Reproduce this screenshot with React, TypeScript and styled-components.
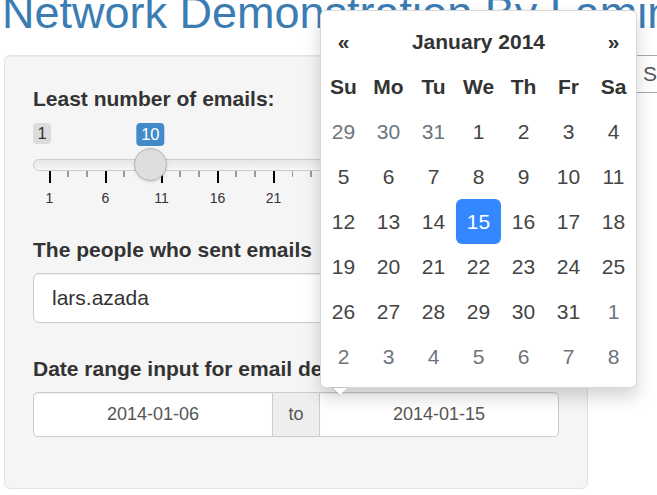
import * as React from "react";
import styled, { createGlobalStyle } from "styled-components";

const GlobalStyle = createGlobalStyle`
  html, body {
    margin: 0;
    overflow: hidden;
    background: #fff;
  }
  body {
    font-family: "Liberation Sans", Arial, Helvetica, sans-serif;
    color: #333;
  }
  * { box-sizing: border-box; }
`;

const colors = {
  text: "#333",
  muted: "#555",
  old: "#6c757d",
  border: "#ccc",
  well: "#f5f5f5",
  wellBorder: "#e3e3e3",
  sliderBlue: "#428bca",
  active: "#3388ff",
  title: "#3b7db3",
};

const SLIDER_MIN = 1;
const SLIDER_MAX = 45;
const SLIDER_VALUE = 10;
const HANDLE = 33;
const TRACK_W = 526;
const UNIT = (TRACK_W - HANDLE) / (SLIDER_MAX - SLIDER_MIN);

const Page = styled.div`
  position: relative;
  width: 657px;
  height: 495px;
  overflow: hidden;
`;

const Title = styled.h2`
  margin: -12px 0 17px 2px;
  font-size: 45px;
  line-height: 49.5px;
  font-weight: normal;
  color: ${colors.title};
  white-space: nowrap;
`;

const Row = styled.div`
  display: flex;
  align-items: flex-start;
`;

const Well = styled.div`
  flex: 0 0 584px;
  margin-left: 4px;
  padding: 28px 28px 29px;
  background: ${colors.well};
  border: 1px solid ${colors.wellBorder};
  border-radius: 6px;
  box-shadow: inset 0 1px 1px rgba(0, 0, 0, 0.05);
`;

const Label = styled.label`
  display: block;
  font-size: 21px;
  line-height: 30px;
  font-weight: bold;
  color: ${colors.text};
  margin-bottom: 8px;
  white-space: nowrap;
`;

const Slider = styled.div`
  position: relative;
  height: 90px;
  margin-bottom: 23px;
`;

const MinLabel = styled.span`
  position: absolute;
  top: 1px;
  left: 0;
  height: 21px;
  padding: 0 4.5px;
  font-size: 16.5px;
  line-height: 21px;
  color: ${colors.text};
  background: rgba(0, 0, 0, 0.1);
  border-radius: 4px;
`;

const SingleLabel = styled.span`
  position: absolute;
  top: 1px;
  height: 23px;
  padding: 0 4.5px;
  font-size: 16.5px;
  line-height: 23px;
  color: #fff;
  background: ${colors.sliderBlue};
  border-radius: 4px;
  transform: translateX(-50%);
`;

const Track = styled.div`
  position: absolute;
  top: 37.5px;
  left: 0;
  width: ${TRACK_W}px;
  height: 12px;
  border: 1px solid ${colors.border};
  border-radius: 12px;
  background: linear-gradient(to bottom, #dedede -50%, #fff 150%);
`;

const Handle = styled.span`
  position: absolute;
  top: 26px;
  width: ${HANDLE}px;
  height: ${HANDLE}px;
  border-radius: 50%;
  border: 1px solid #b5b5b5;
  background: #dedede;
  box-shadow: 0 1px 3px rgba(0, 0, 0, 0.15);
`;

const Tick = styled.span<{ $major?: boolean }>`
  position: absolute;
  top: 49.5px;
  width: ${(p) => (p.$major ? 2 : 1.5)}px;
  height: ${(p) => (p.$major ? 11.5 : 6)}px;
  background: ${(p) => (p.$major ? "#000" : "#9a9a9a")};
`;

const GridText = styled.span`
  position: absolute;
  top: 69px;
  font-size: 14px;
  line-height: 14px;
  color: ${colors.text};
  transform: translateX(-50%);
`;

const Selectize = styled.div`
  height: 50px;
  margin-bottom: 31px;
  padding: 0 18px;
  display: flex;
  align-items: center;
  font-size: 21px;
  color: ${colors.text};
  background: #fff;
  border: 1px solid ${colors.border};
  border-radius: 6px;
  box-shadow: inset 0 1px 1px rgba(0, 0, 0, 0.075);
`;

const InputGroup = styled.div`
  display: flex;
  height: 45px;
  margin-bottom: 22px;
`;

const DateInput = styled.div<{ $side: "left" | "right" }>`
  flex: 1;
  display: flex;
  align-items: center;
  justify-content: center;
  font-size: 18px;
  color: ${colors.muted};
  background: #fff;
  border: 1px solid ${colors.border};
  border-radius: ${(p) => (p.$side === "left" ? "4.5px 0 0 4.5px" : "0 4.5px 4.5px 0")};
  box-shadow: inset 0 1px 1px rgba(0, 0, 0, 0.075);
`;

const Addon = styled.div`
  flex: 0 0 46px;
  display: flex;
  align-items: center;
  justify-content: center;
  font-size: 18px;
  color: ${colors.muted};
  background: #eee;
  border-top: 1px solid ${colors.border};
  border-bottom: 1px solid ${colors.border};
`;

const MainPanel = styled.div`
  flex: 1;
  margin-left: 45px;
`;

const SearchBox = styled.div`
  height: 38px;
  padding-left: 9px;
  font-size: 21px;
  line-height: 36px;
  color: ${colors.muted};
  background: #fff;
  border: 1px solid #aaa;
  white-space: nowrap;
`;

const Calendar = styled.div`
  position: absolute;
  top: 10px;
  left: 320px;
  width: 317px;
  padding: 8px 0;
  background: #fff;
  border: 1px solid rgba(0, 0, 0, 0.15);
  border-radius: 6px;
  box-shadow: 0 9px 18px rgba(0, 0, 0, 0.175);
  z-index: 10;

  &::before,
  &::after {
    content: "";
    position: absolute;
    border-left: solid transparent;
    border-right: solid transparent;
    border-top: solid;
  }
  &::before {
    left: 10px;
    bottom: -9px;
    border-width: 9px 8.5px 0;
    border-top-color: rgba(0, 0, 0, 0.12);
  }
  &::after {
    left: 11.5px;
    bottom: -7.5px;
    border-width: 7.5px 7px 0;
    border-top-color: #fff;
  }
`;

const CalGrid = styled.div`
  display: grid;
  grid-template-columns: repeat(7, 1fr);
  grid-auto-rows: 45px;
`;

const Cell = styled.div<{ $muted?: boolean; $active?: boolean; $bold?: boolean; $span?: number }>`
  display: flex;
  align-items: center;
  justify-content: center;
  font-size: 21px;
  font-weight: ${(p) => (p.$bold ? "bold" : "normal")};
  color: ${(p) => (p.$active ? "#fff" : p.$muted ? colors.old : p.$bold ? colors.text : "#444")};
  background: ${(p) => (p.$active ? colors.active : "transparent")};
  border-radius: 6px;
  grid-column: ${(p) => (p.$span ? `span ${p.$span}` : "auto")};
`;

const weekdays = ["Su", "Mo", "Tu", "We", "Th", "Fr", "Sa"];

function buildDays() {
  const days: { n: number; muted: boolean }[] = [];
  [29, 30, 31].forEach((n) => days.push({ n, muted: true }));
  for (let n = 1; n <= 31; n++) days.push({ n, muted: false });
  for (let n = 1; days.length < 42; n++) days.push({ n, muted: true });
  return days;
}

function RangeSlider() {
  const pos = (v: number) => HANDLE / 2 + (v - SLIDER_MIN) * UNIT;
  const majors: number[] = [];
  for (let v = SLIDER_MIN; v <= SLIDER_MAX; v += 5) majors.push(v);
  const minors: number[] = [];
  majors.slice(0, -1).forEach((v) => {
    minors.push(v + 5 / 3, v + 10 / 3);
  });
  return (
    <Slider>
      <Track />
      {majors.map((v) => (
        <Tick key={`M${v}`} $major style={{ left: pos(v) - 1 }} />
      ))}
      {minors.map((v) => (
        <Tick key={`m${v}`} style={{ left: pos(v) - 0.75 }} />
      ))}
      {majors.map((v) => (
        <GridText key={`t${v}`} style={{ left: pos(v) }}>
          {v}
        </GridText>
      ))}
      <MinLabel>{SLIDER_MIN}</MinLabel>
      <SingleLabel style={{ left: pos(SLIDER_VALUE) }}>{SLIDER_VALUE}</SingleLabel>
      <Handle style={{ left: pos(SLIDER_VALUE) - HANDLE / 2 }} />
    </Slider>
  );
}

function DatePicker() {
  const days = buildDays();
  return (
    <Calendar>
      <CalGrid>
        <Cell $bold>«</Cell>
        <Cell $bold $span={5}>January 2014</Cell>
        <Cell $bold>»</Cell>
        {weekdays.map((d) => (
          <Cell key={d} $bold>
            {d}
          </Cell>
        ))}
        {days.map((d, i) => (
          <Cell key={i} $muted={d.muted} $active={!d.muted && d.n === 15}>
            {d.n}
          </Cell>
        ))}
      </CalGrid>
    </Calendar>
  );
}

export default function App() {
  return (
    <Page>
      <GlobalStyle />
      <Title>Network Demonstration By Lamin</Title>
      <Row>
        <Well>
          <Label>Least number of emails:</Label>
          <RangeSlider />
          <Label>The people who sent emails</Label>
          <Selectize>lars.azada</Selectize>
          <Label>Date range input for email delivery:</Label>
          <InputGroup>
            <DateInput $side="left">2014-01-06</DateInput>
            <Addon>to</Addon>
            <DateInput $side="right">2014-01-15</DateInput>
          </InputGroup>
        </Well>
        <MainPanel>
          <SearchBox>Search</SearchBox>
        </MainPanel>
      </Row>
      <DatePicker />
    </Page>
  );
}
